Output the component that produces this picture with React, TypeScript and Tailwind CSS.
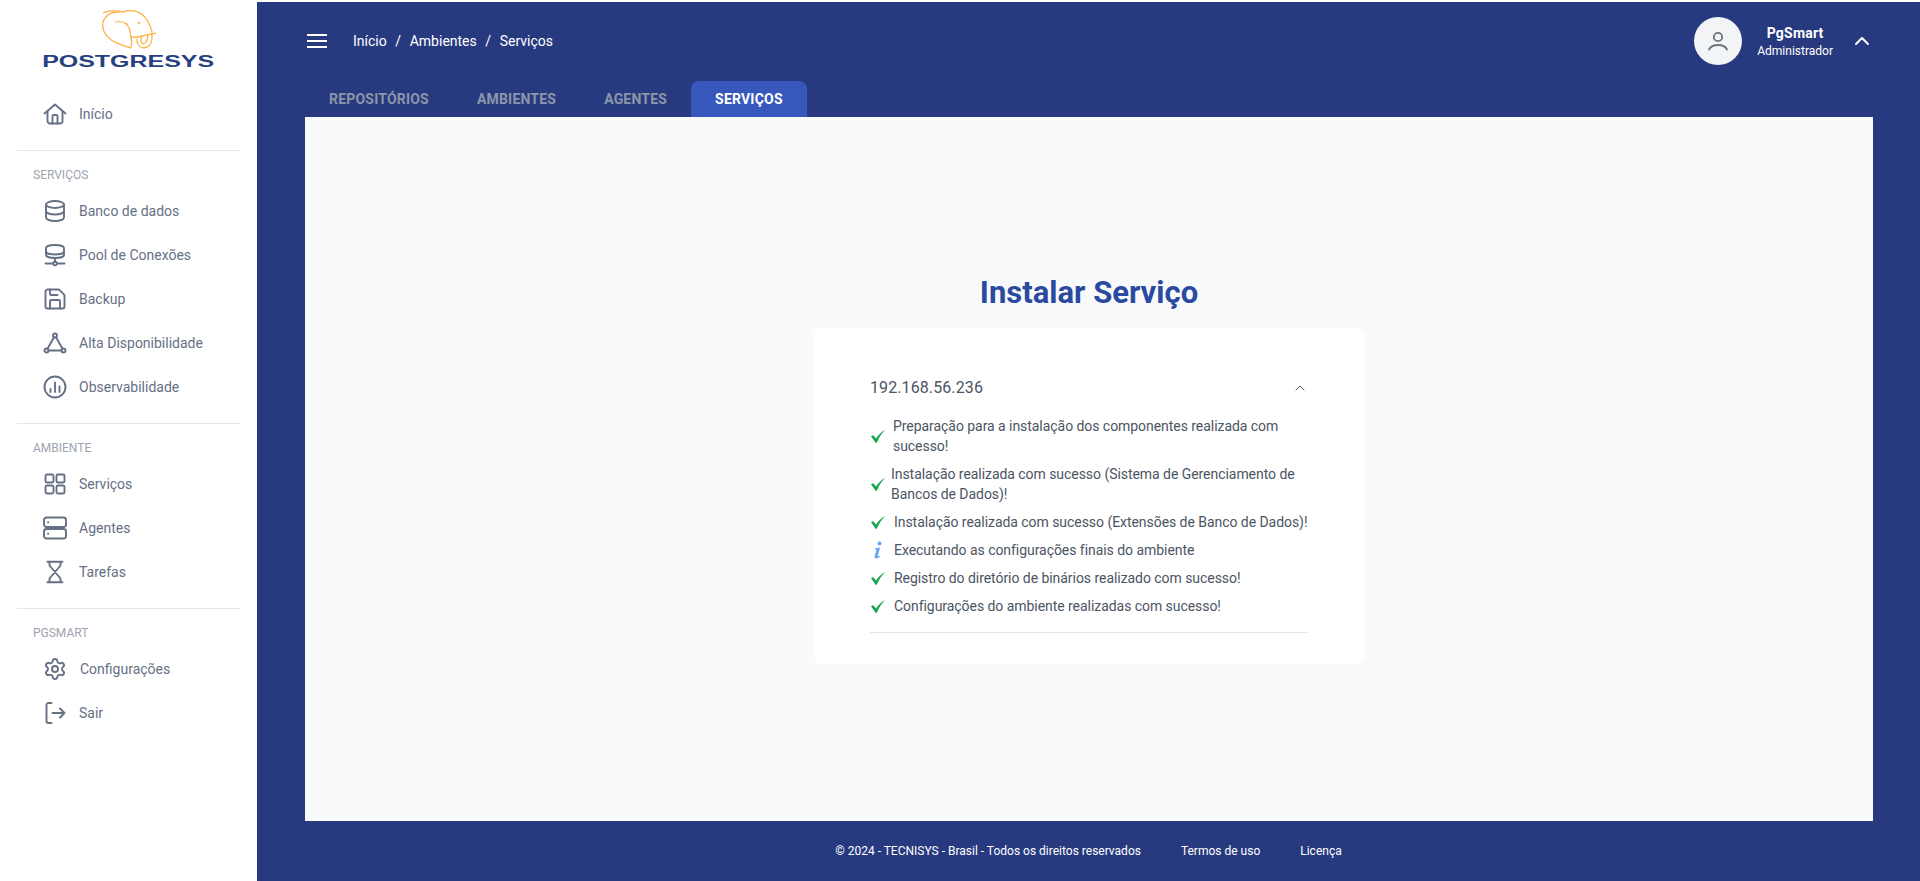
import { ChevronUp, Settings } from 'lucide-react';
import type { ReactNode } from 'react';

function Ico({ children }: { children: ReactNode }) {
  return (
    <svg viewBox="0 0 24 24" fill="none" stroke="currentColor" strokeWidth={1.9} strokeLinecap="round" strokeLinejoin="round" className="w-6 h-6 shrink-0 text-[#667085]">
      {children}
    </svg>
  );
}

const icons: Record<string, ReactNode> = {
  home: <Ico><path d="M1.500 11.500 12 2.500l10.500 9" /><path d="M4.500 9.500V19a2.500 2.500 0 0 0 2.500 2.500h10a2.500 2.500 0 0 0 2.500-2.500V9.500" /><path d="M9.500 21.500V14a1 1 0 0 1 1-1h3a1 1 0 0 1 1 1v7.500" /></Ico>,
  database: <Ico><ellipse cx="12" cy="5.500" rx="9" ry="3.500" /><path d="M3 5.500v13c0 2 4 3.500 9 3.500s9-1.500 9-3.500v-13" /><path d="M3 12c0 2 4 3.500 9 3.500s9-1.500 9-3.500" /></Ico>,
  pool: <Ico><path d="M3 5c0-1.700 4-3 9-3s9 1.300 9 3v7c0 1.700-4 3-9 3s-9-1.300-9-3z" /><path d="M3 8.500c0 1.700 4 3 9 3s9-1.300 9-3" /><path d="M12 15v3.500" /><circle cx="12" cy="20.500" r="1.800" /><path d="M2.500 20.500h7.500M14 20.500h7.500" /></Ico>,
  save: <Ico><path d="M15.200 2.500a2 2 0 0 1 1.400.6l4.300 4.300a2 2 0 0 1 .6 1.400V19.500a2 2 0 0 1-2 2h-15a2 2 0 0 1-2-2v-15a2 2 0 0 1 2-2z" /><path d="M17 21.500V14a1 1 0 0 0-1-1H8a1 1 0 0 0-1 1v7.500" /><path d="M7 2.500V7a1 1 0 0 0 1 1h6.500" /></Ico>,
  ha: <Ico><circle cx="12" cy="4.500" r="2" /><circle cx="3.500" cy="19.500" r="2" /><circle cx="20.500" cy="19.500" r="2" /><path d="M11 6.300 4.500 17.700M13 6.300l6.500 11.400M5.500 19.500h13" /></Ico>,
  chart: <Ico><circle cx="12" cy="12" r="10.500" /><path d="M7.500 17v-3M12 17V7.500M16.500 17v-5.500" /></Ico>,
  grid: <Ico><rect x="2.500" y="2.500" width="8" height="8" rx="1.500" /><rect x="13.500" y="2.500" width="8" height="8" rx="1.500" /><rect x="2.500" y="13.500" width="8" height="8" rx="1.500" /><rect x="13.500" y="13.500" width="8" height="8" rx="1.500" /></Ico>,
  server: <Ico><rect x="1" y="1.500" width="22" height="9.500" rx="2.500" /><rect x="1" y="13" width="22" height="9.500" rx="2.500" /><path d="M5 6.200h.2M5 17.800h.2" /></Ico>,
  hourglass: <Ico><path d="M4.500 1.800h15M4.500 22.200h15" /><path d="M6.500 2v3.500L17.500 18.500V22M17.500 2v3.500L6.500 18.500V22" /></Ico>,
  logout: <Ico><path d="M8.500 2H5.500A2 2 0 0 0 3.500 4v16a2 2 0 0 0 2 2h3" /><path d="M9.500 12h12M17 7.500l4.500 4.500-4.500 4.500" /></Ico>,
};

function Item({ icon, label, shift }: { icon: ReactNode; label: string; shift?: boolean }) {
  return (
    <a className="flex items-center h-11 pl-[43px] gap-3 text-sm text-[#667085]">
      {icon}
      <span className={shift ? 'ml-px' : ''}>{label}</span>
    </a>
  );
}

function Section({ title, children }: { title: string; children: ReactNode }) {
  return (
    <div className="mx-[17px] border-t border-[#e5e7eb] pt-4 mb-[14px]">
      <div className="h-4 mb-[6px] ml-4 text-xs leading-4 text-[#9ca3af]">{title}</div>
      <div className="-mx-[17px]">{children}</div>
    </div>
  );
}

function Logo() {
  return (
    <div className="h-[90px] flex flex-col items-center pt-2">
      <svg viewBox="0 0 160 115" fill="none" stroke="#fbb040" strokeWidth={3.6} strokeLinecap="round" strokeLinejoin="round" className="w-[54px] h-[39px]">
        <path d="M4 8C22 0 48 2 62 6 82-2 112 1 128 22c9 11 16 26 20 42v24c-2 15-14 26-27 24-12-2-19-14-17-26" />
        <path d="M50 6C22 4 1 24 2 46c1 22 18 42 42 52 15 7 30 11 41 14 4-12 4-24 0-34" />
        <path d="M40 36c10-4 24-1 34 5l-6-2c8 4 16 18 17 39" />
        <path d="M85 78c10 4 20 3 30-1l45-9" />
        <path d="M118 78c-4 8-4 18 2 21 6 2 12-4 14-14l2-12" />
        <path d="M108 38h2.500" strokeWidth={5} />
      </svg>
      <div className="mt-[6px] font-['Liberation_Sans',sans-serif] font-bold text-[16px] leading-[14px] text-[#27407f] scale-x-[1.56] whitespace-nowrap">POSTGRESYS</div>
    </div>
  );
}

function Check() {
  return (
    <svg viewBox="0 0 16 16" className="w-4 h-4 shrink-0">
      <path d="M1 8.300 3.200 7.200 6 10.600C8 7.200 11 4.300 15 2 11.300 6 8.800 9.800 6.800 14.800H5.600z" fill="#16a34a" />
    </svg>
  );
}

function InfoIcon() {
  return (
    <svg viewBox="0 0 16 20" className="w-4 h-5 shrink-0">
      <circle cx="9.500" cy="3.500" r="2" fill="#60a5fa" />
      <path d="M5 8.500 10 7.500 7.800 15.500c-.2 1 .4 1.200 2 .2l.2.700C8.500 18 5.800 18.800 5 18c-.7-.6-.4-1.600 0-3l1.500-5.300L5 9.500z" fill="#60a5fa" />
    </svg>
  );
}

const steps: { text: string; kind: 'ok' | 'info'; gap: string; nowrap?: boolean }[] = [
  { text: 'Preparação para a instalação dos componentes realizada com sucesso!', kind: 'ok', gap: 'w-[23px]' },
  { text: 'Instalação realizada com sucesso (Sistema de Gerenciamento de Bancos de Dados)!', kind: 'ok', gap: 'w-[21px]' },
  { text: 'Instalação realizada com sucesso (Extensões de Banco de Dados)!', kind: 'ok', gap: 'w-6', nowrap: true },
  { text: 'Executando as configurações finais do ambiente', kind: 'info', gap: 'w-6' },
  { text: 'Registro do diretório de binários realizado com sucesso!', kind: 'ok', gap: 'w-6' },
  { text: 'Configurações do ambiente realizadas com sucesso!', kind: 'ok', gap: 'w-6' },
];

export default function App() {
  return (
    <div className="h-screen w-full flex pt-[2px] bg-white font-['Roboto',sans-serif] overflow-hidden">
      <aside className="w-[257px] shrink-0 bg-white">
        <Logo />
        <div className="mb-[14px]">
          <Item icon={icons.home} label="Início" />
        </div>
        <Section title="SERVIÇOS">
          <Item icon={icons.database} label="Banco de dados" />
          <Item icon={icons.pool} label="Pool de Conexões" />
          <Item icon={icons.save} label="Backup" />
          <Item icon={icons.ha} label="Alta Disponibilidade" />
          <Item icon={icons.chart} label="Observabilidade" />
        </Section>
        <Section title="AMBIENTE">
          <Item icon={icons.grid} label="Serviços" />
          <Item icon={icons.server} label="Agentes" />
          <Item icon={icons.hourglass} label="Tarefas" />
        </Section>
        <Section title="PGSMART">
          <Item icon={<Settings className="w-6 h-6 shrink-0 text-[#667085]" strokeWidth={1.9} />} label="Configurações" shift />
          <Item icon={icons.logout} label="Sair" />
        </Section>
      </aside>

      <main className="flex-1 min-w-0 flex flex-col bg-[#273a7f]">
        {/* Topo */}
        <header className="h-[79px] shrink-0 flex items-center pl-[50px] pr-[46px] pb-[2px] text-white">
          <svg viewBox="0 0 20 14" className="w-5 h-[14px] shrink-0" stroke="currentColor" strokeWidth={1.8}>
            <path d="M0 1h20M0 7h20M0 13h20" />
          </svg>
          <nav className="ml-[26px] text-sm flex gap-[8.600px]">
            <span>Início</span><span>/</span><span>Ambientes</span><span>/</span><span>Serviços</span>
          </nav>
          <div className="ml-auto flex items-center">
            <div className="w-12 h-12 rounded-full bg-[#f3f4f6] flex items-center justify-center ml-px -mr-px">
              <svg viewBox="0 0 24 24" fill="none" stroke="#6b7280" strokeWidth={1.8} strokeLinecap="round" className="w-6 h-6">
                <circle cx="12" cy="8" r="4.200" />
                <path d="M3 20.500c1.500-3 5-4.500 9-4.500s7.500 1.500 9 4.500" />
              </svg>
            </div>
            <div className="ml-4 flex flex-col items-center">
              <span className="text-sm font-bold leading-5 tracking-[0.2px]">PgSmart</span>
              <span className="text-xs leading-4">Administrador</span>
            </div>
            <ChevronUp className="ml-[17px] w-6 h-6" strokeWidth={2} />
          </div>
        </header>

        {/* Abas */}
        <div className="h-9 shrink-0 flex pl-[48px] text-sm font-bold tracking-[0.2px]">
          <div className="px-6 flex items-center text-[#8b96ab]">REPOSITÓRIOS</div>
          <div className="px-6 flex items-center text-[#8b96ab]">AMBIENTES</div>
          <div className="px-6 flex items-center text-[#8b96ab]">AGENTES</div>
          <div className="px-6 flex items-center text-white bg-[#3757bd] rounded-t-lg">SERVIÇOS</div>
        </div>

        <section className="flex-1 min-h-0 ml-[48px] mr-[47px] bg-[#f9fafb] flex flex-col items-center">
          <h1 className="mt-[158px] text-[31px] leading-9 font-bold text-[#2a4a9f]">Instalar Serviço</h1>
          <div className="mt-[17px] w-[550px] h-[336px] bg-white rounded-lg px-14 pt-[48px]">
            <div className="flex items-center justify-between h-6 text-base tracking-[0.1px] text-[#4b5563]">
              <span>192.168.56.236</span>
              <ChevronUp className="w-4 h-4" strokeWidth={1.5} />
            </div>
            <ul className="mt-[16px] flex flex-col gap-2 text-sm leading-5 tracking-[-0.05px] text-[#4b5563] pb-[16px] border-b border-[#e5e7eb]">
              {steps.map((s) => (
                <li key={s.text} className="flex items-center">
                  <span className={`${s.gap} shrink-0`}>{s.kind === 'ok' ? <Check /> : <InfoIcon />}</span>
                  <span className={s.nowrap ? 'whitespace-nowrap' : ''}>{s.text}</span>
                </li>
              ))}
            </ul>
          </div>
        </section>

        <footer className="h-[60px] shrink-0 flex items-center justify-center gap-10 text-xs text-white">
          <span>© 2024 - TECNISYS - Brasil - Todos os direitos reservados</span>
          <span>Termos de uso</span>
          <span>Licença</span>
        </footer>
      </main>
    </div>
  );
}
